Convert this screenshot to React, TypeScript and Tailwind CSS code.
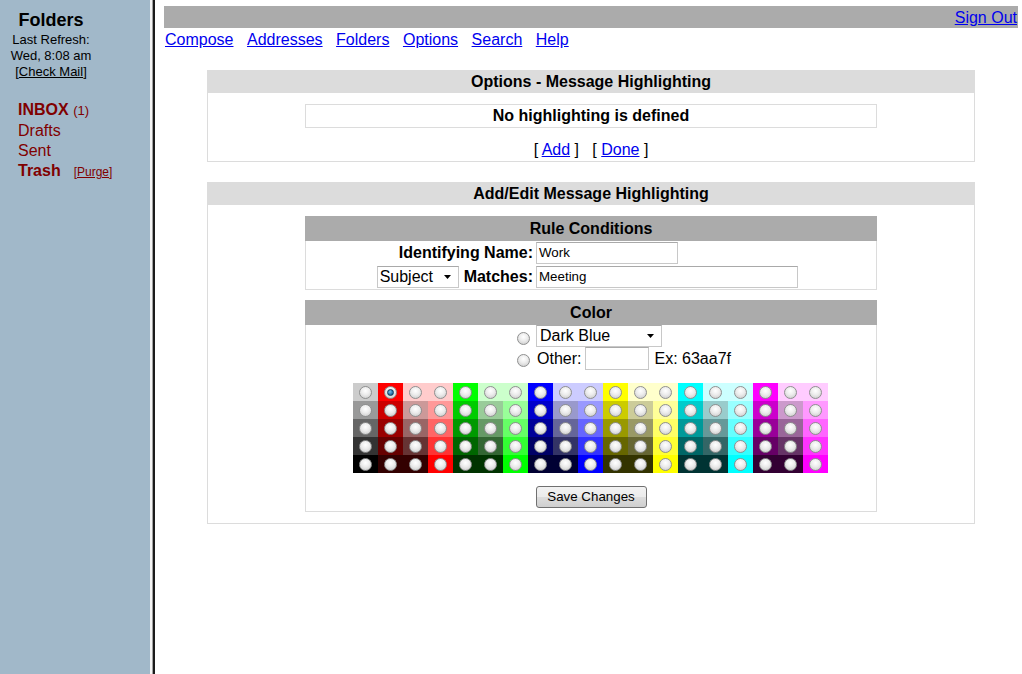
import React from "react";

const COLS: string[][] = [
  ["bg-[#cccccc]", "bg-[#999999]", "bg-[#666666]", "bg-[#333333]", "bg-[#000000]"],
  ["bg-[#ff0000]", "bg-[#cc0000]", "bg-[#990000]", "bg-[#660000]", "bg-[#330000]"],
  ["bg-[#ffcccc]", "bg-[#cc9999]", "bg-[#996666]", "bg-[#663333]", "bg-[#330000]"],
  ["bg-[#ffcccc]", "bg-[#ff9999]", "bg-[#ff6666]", "bg-[#ff3333]", "bg-[#ff0000]"],
  ["bg-[#00ff00]", "bg-[#00cc00]", "bg-[#009900]", "bg-[#006600]", "bg-[#003300]"],
  ["bg-[#ccffcc]", "bg-[#99cc99]", "bg-[#669966]", "bg-[#336633]", "bg-[#003300]"],
  ["bg-[#ccffcc]", "bg-[#99ff99]", "bg-[#66ff66]", "bg-[#33ff33]", "bg-[#00ff00]"],
  ["bg-[#0000ff]", "bg-[#0000cc]", "bg-[#000099]", "bg-[#000066]", "bg-[#000033]"],
  ["bg-[#ccccff]", "bg-[#9999cc]", "bg-[#666699]", "bg-[#333366]", "bg-[#000033]"],
  ["bg-[#ccccff]", "bg-[#9999ff]", "bg-[#6666ff]", "bg-[#3333ff]", "bg-[#0000ff]"],
  ["bg-[#ffff00]", "bg-[#cccc00]", "bg-[#999900]", "bg-[#666600]", "bg-[#333300]"],
  ["bg-[#ffffcc]", "bg-[#cccc99]", "bg-[#999966]", "bg-[#666633]", "bg-[#333300]"],
  ["bg-[#ffffcc]", "bg-[#ffff99]", "bg-[#ffff66]", "bg-[#ffff33]", "bg-[#ffff00]"],
  ["bg-[#00ffff]", "bg-[#00cccc]", "bg-[#009999]", "bg-[#006666]", "bg-[#003333]"],
  ["bg-[#ccffff]", "bg-[#99cccc]", "bg-[#669999]", "bg-[#336666]", "bg-[#003333]"],
  ["bg-[#ccffff]", "bg-[#99ffff]", "bg-[#66ffff]", "bg-[#33ffff]", "bg-[#00ffff]"],
  ["bg-[#ff00ff]", "bg-[#cc00cc]", "bg-[#990099]", "bg-[#660066]", "bg-[#330033]"],
  ["bg-[#ffccff]", "bg-[#cc99cc]", "bg-[#996699]", "bg-[#663366]", "bg-[#330033]"],
  ["bg-[#ffccff]", "bg-[#ff99ff]", "bg-[#ff66ff]", "bg-[#ff33ff]", "bg-[#ff00ff]"],
];

function Radio({ checked = false }: { checked?: boolean }) {
  return (
    <span className="relative inline-block w-[13px] h-[13px] rounded-full border border-[#8f9090] bg-[radial-gradient(circle_at_50%_35%,#ffffff_0%,#ececec_45%,#c4c4c4_100%)] shrink-0">
      {checked && (
        <span className="absolute left-[2px] top-[2px] w-[7px] h-[7px] rounded-full border border-[#0f3a5c] bg-[radial-gradient(circle_at_40%_35%,#7cc0ea_0%,#2a78b0_55%,#123f66_100%)]" />
      )}
    </span>
  );
}

function Caret() {
  return (
    <svg width="7" height="4" viewBox="0 0 7 4" className="shrink-0">
      <path d="M0 0 L7 0 L3.5 4 Z" fill="#000" />
    </svg>
  );
}

const linkCls = "text-[#0000ee] underline";

export default function App() {
  return (
    <div className="flex w-[1022px] h-[674px] overflow-hidden bg-white text-black font-['Liberation_Sans',Arial,sans-serif]">
      {/* Sidebar */}
      <div className="w-[150px] shrink-0 bg-[#a1b8c9] text-[13px]">
        <div className="w-[102px] pt-[9px] text-center">
          <div className="text-[18px] font-bold leading-[22px]">Folders</div>
          <div className="leading-[16px] mt-[1px]">Last Refresh:</div>
          <div className="leading-[16px]">Wed, 8:08 am</div>
          <div className="leading-[16px]">
            [<span className="underline">Check Mail</span>]
          </div>
        </div>
        <div className="pl-[18px] mt-[20px] text-[#800000] text-[16px] leading-[20px]">
          <div>
            <span className="font-bold">INBOX</span> <span className="text-[13px]">(1)</span>
          </div>
          <div>Drafts</div>
          <div>Sent</div>
          <div className="flex items-baseline">
            <span className="font-bold">Trash</span>
            <span className="ml-[13px] text-[12px] underline">[Purge]</span>
          </div>
        </div>
      </div>
      {/* Frame border */}
      <div className="w-[2px] shrink-0 bg-[#f4f4f4]" />
      <div className="w-px shrink-0 bg-[#a0a0a0]" />
      <div className="w-[2px] shrink-0 bg-[#1a1a1a]" />

      {/* Main */}
      <div className="flex-1 pl-[9px] pr-[4px] pt-[6px] text-[16px]">
        <div className="h-[22px] bg-[#ababab] flex items-center justify-end pr-px pt-px">
          <a className={linkCls}>Sign Out</a>
        </div>
        <div className="flex gap-[13.5px] pl-px mt-[3px] leading-[18px]">
          <a className={linkCls}>Compose</a>
          <a className={linkCls}>Addresses</a>
          <a className={linkCls}>Folders</a>
          <a className={linkCls}>Options</a>
          <a className={linkCls}>Search</a>
          <a className={linkCls}>Help</a>
        </div>

        {/* Box 1 */}
        <div className="mx-auto mt-[21px] w-[768px] border border-[#dcdcdc]">
          <div className="h-[23px] -mt-px -mx-px bg-[#dcdcdc] flex items-center justify-center font-bold">
            Options - Message Highlighting
          </div>
          <div className="mt-[11px] mx-auto w-[572px] h-[24px] border border-[#dcdcdc] flex items-center justify-center font-bold">
            No highlighting is defined
          </div>
          <div className="mt-[13px] mb-[2px] leading-[18px] text-center whitespace-pre">
            {"[ "}
            <a className={linkCls}>Add</a>
            {" ]   [ "}
            <a className={linkCls}>Done</a>
            {" ]"}
          </div>
        </div>

        {/* Box 2 */}
        <div className="mx-auto mt-[20px] w-[768px] border border-[#dcdcdc] pb-[11px]">
          <div className="h-[23px] -mt-px -mx-px bg-[#dcdcdc] flex items-center justify-center font-bold">
            Add/Edit Message Highlighting
          </div>

          {/* Rule conditions */}
          <div className="mt-[11px] mx-auto w-[572px] border border-[#dcdcdc]">
            <div className="h-[25px] -mt-px -mx-px bg-[#ababab] flex items-center justify-center font-bold">
              Rule Conditions
            </div>
            <div className="grid grid-cols-[227px_1fr]">
              <div className="h-[24px] flex items-center justify-end font-bold">Identifying Name:</div>
              <div className="h-[24px] flex items-center pl-[3px]">
                <div className="w-[142px] h-[22px] border border-[#c8c8c8] border-t-[#a9a9a9] flex items-center px-[2px] text-[13.33px]">
                  Work
                </div>
              </div>
              <div className="h-[24px] flex items-center justify-end gap-[5px]">
                <div className="w-[82px] h-[22px] border border-[#c8c8c8] border-t-[#a9a9a9] flex items-center justify-between pl-[2px] pr-[7px]">
                  <span>Subject</span>
                  <Caret />
                </div>
                <span className="font-bold">Matches:</span>
              </div>
              <div className="h-[24px] flex items-center pl-[3px]">
                <div className="w-[262px] h-[22px] border border-[#c8c8c8] border-t-[#a9a9a9] flex items-center px-[2px] text-[13.33px]">
                  Meeting
                </div>
              </div>
            </div>
          </div>

          {/* Color */}
          <div className="mt-[10px] mx-auto w-[572px] border border-[#dcdcdc] pb-[3px]">
            <div className="h-[25px] -mt-px -mx-px bg-[#ababab] flex items-center justify-center font-bold">
              Color
            </div>
            <div className="grid grid-cols-[227px_1fr]">
              <div className="h-[22px] flex items-center justify-end pr-[3px] pt-[4px]">
                <Radio />
              </div>
              <div className="h-[22px] flex items-center pl-[3px]">
                <div className="w-[126px] h-[22px] border border-[#c8c8c8] border-t-[#a9a9a9] flex items-center justify-between pl-[3px] pr-[7px]">
                  <span>Dark Blue</span>
                  <Caret />
                </div>
              </div>
              <div className="h-[23px] flex items-center justify-end pr-[3px] pt-[4px]">
                <Radio />
              </div>
              <div className="h-[23px] flex items-center pl-[4px]">
                <span>Other:</span>
                <div className="ml-[4px] w-[64px] h-[23px] border border-[#c8c8c8] border-t-[#a9a9a9]" />
                <span className="ml-[5px]">Ex: 63aa7f</span>
              </div>
            </div>

            <div className="mt-[13px] ml-[47px] w-[475px] grid grid-cols-[repeat(19,25px)] grid-rows-[repeat(5,18px)] grid-flow-col">
              {COLS.map((col, ci) =>
                col.map((cls, ri) => (
                  <div key={`${ci}-${ri}`} className={`${cls} flex items-center justify-center`}>
                    <Radio checked={ci === 1 && ri === 0} />
                  </div>
                ))
              )}
            </div>

            <div className="mt-[13px] flex justify-center">
              <div className="w-[111px] h-[22px] rounded-[3px] border border-[#707070] bg-[linear-gradient(#f2f2f2,#ebebeb_50%,#dddddd_50%,#cfcfcf)] flex items-center justify-center text-[13.33px]">
                Save Changes
              </div>
            </div>
          </div>
        </div>
      </div>
    </div>
  );
}
